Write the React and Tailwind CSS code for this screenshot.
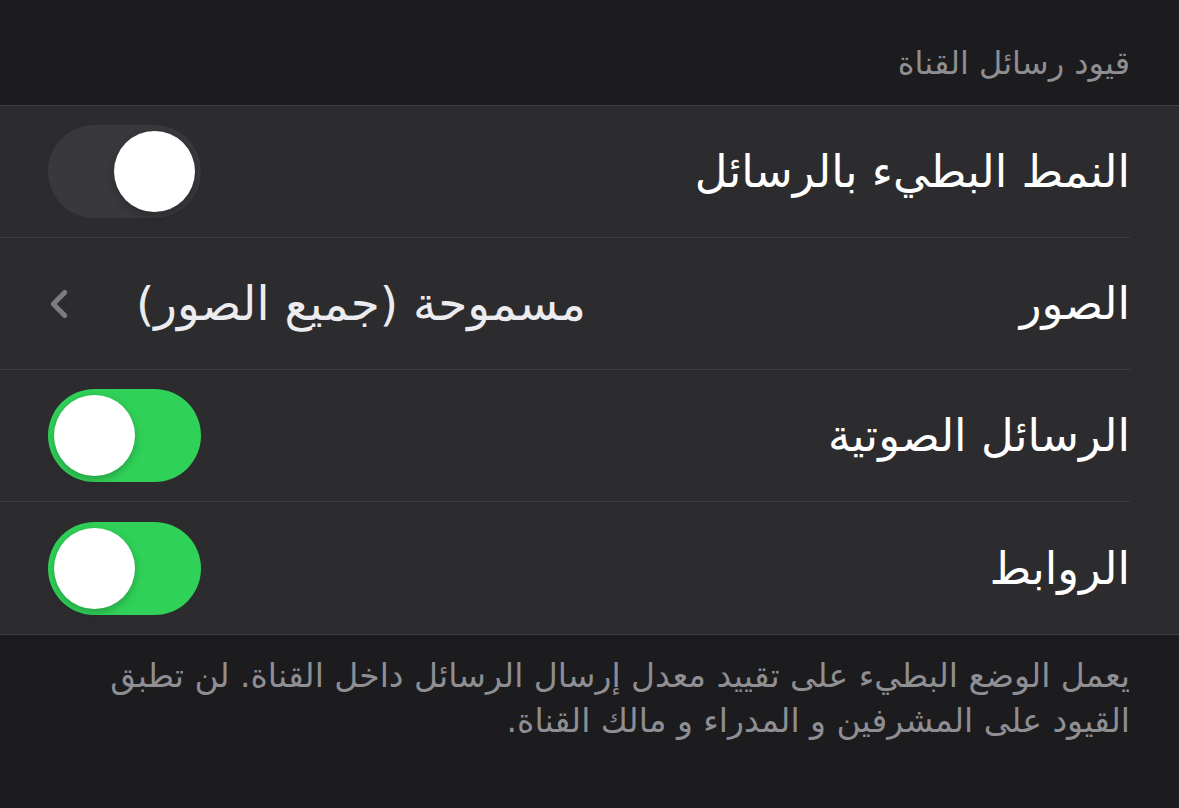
import { ChevronLeft } from "lucide-react";

function Toggle({ on }) {
  return (
    <div
      className={
        "w-[153px] h-[93px] rounded-full p-[6px] flex shrink-0 " +
        (on ? "bg-[#30d158] justify-end" : "bg-[#39393d] justify-start")
      }
    >
      <div className="w-[81px] h-[81px] rounded-full bg-white shadow-[0_3px_8px_rgba(0,0,0,0.25)]" />
    </div>
  );
}

function Row({ title, last, children }) {
  return (
    <div className="pr-[49px] bg-[#2c2c2e]">
      <div
        className={
          "h-[132px] pl-[48px] flex items-center justify-between " +
          (last ? "" : "border-b border-[#3d3d41]")
        }
      >
        <div className="text-[45px] text-white leading-none">{title}</div>
        {children}
      </div>
    </div>
  );
}

export default function App() {
  const font = { fontFamily: '"DejaVu Sans", sans-serif' };

  return (
    <div dir="rtl" className="w-full h-[808px] bg-[#1c1c1e] overflow-hidden" style={font}>
      <div className="h-[105px] pr-[49px] flex items-end pb-[26px]">
        <div className="text-[32px] text-[#8e8e93] leading-none">قيود رسائل القناة</div>
      </div>

      <div className="border-t border-b border-[#3d3d41]">
        <Row title="النمط البطيء بالرسائل">
          <Toggle on={false} />
        </Row>
        <Row title="الصور">
          <div className="flex items-center gap-[54px]">
            <div className="text-[47px] text-[#ececf0] leading-none">مسموحة (جميع الصور)</div>
            <ChevronLeft className="w-[46px] h-[46px] text-[#7c7c80] -ml-[12px]" strokeWidth={2.6} />
          </div>
        </Row>
        <Row title="الرسائل الصوتية">
          <Toggle on />
        </Row>
        <Row title="الروابط" last>
          <Toggle on />
        </Row>
      </div>

      <div className="pr-[49px] pl-[48px] pt-[18px] text-[33px] leading-[45px] text-[#8e8e93]">
        <div>يعمل الوضع البطيء على تقييد معدل إرسال الرسائل داخل القناة. لن تطبق</div>
        <div>القيود على المشرفين و المدراء و مالك القناة.</div>
      </div>
    </div>
  );
}
